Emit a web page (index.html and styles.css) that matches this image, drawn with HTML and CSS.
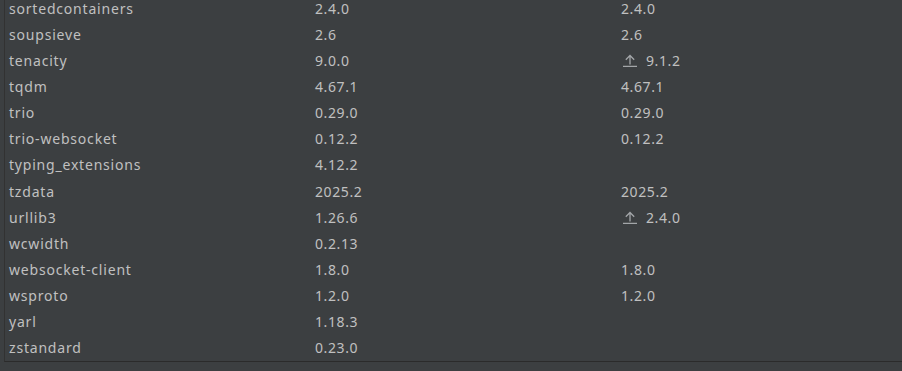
FILE: index.html
```html
<!DOCTYPE html>
<html>
<head>
<meta charset="utf-8">
<link rel="stylesheet" href="styles.css">
</head>
<body>
<div class="panel">
  <div class="table">
    <div class="row"><span class="cell name">sortedcontainers</span><span class="cell">2.4.0</span><span class="cell">2.4.0</span></div>
    <div class="row"><span class="cell name">soupsieve</span><span class="cell">2.6</span><span class="cell">2.6</span></div>
    <div class="row"><span class="cell name">tenacity</span><span class="cell">9.0.0</span><span class="cell upgrade"><svg class="up" width="14" height="13" viewBox="0 0 14 13"><path d="M7 1.5V10.5M2.8 5.7L7 1.5L11.2 5.7M0 12.5H14" fill="none" stroke="#a3a6a9" stroke-width="1.3"/></svg>9.1.2</span></div>
    <div class="row"><span class="cell name">tqdm</span><span class="cell">4.67.1</span><span class="cell">4.67.1</span></div>
    <div class="row"><span class="cell name">trio</span><span class="cell">0.29.0</span><span class="cell">0.29.0</span></div>
    <div class="row"><span class="cell name">trio-websocket</span><span class="cell">0.12.2</span><span class="cell">0.12.2</span></div>
    <div class="row"><span class="cell name">typing_extensions</span><span class="cell">4.12.2</span><span class="cell"></span></div>
    <div class="row"><span class="cell name">tzdata</span><span class="cell">2025.2</span><span class="cell">2025.2</span></div>
    <div class="row"><span class="cell name">urllib3</span><span class="cell">1.26.6</span><span class="cell upgrade"><svg class="up" width="14" height="13" viewBox="0 0 14 13"><path d="M7 1.5V10.5M2.8 5.7L7 1.5L11.2 5.7M0 12.5H14" fill="none" stroke="#a3a6a9" stroke-width="1.3"/></svg>2.4.0</span></div>
    <div class="row"><span class="cell name">wcwidth</span><span class="cell">0.2.13</span><span class="cell"></span></div>
    <div class="row"><span class="cell name">websocket-client</span><span class="cell">1.8.0</span><span class="cell">1.8.0</span></div>
    <div class="row"><span class="cell name">wsproto</span><span class="cell">1.2.0</span><span class="cell">1.2.0</span></div>
    <div class="row"><span class="cell name">yarl</span><span class="cell">1.18.3</span><span class="cell"></span></div>
    <div class="row"><span class="cell name">zstandard</span><span class="cell">0.23.0</span><span class="cell"></span></div>
  </div>
</div>
</body>
</html>
```
FILE: styles.css
```css
html, body {
  margin: 0;
  padding: 0;
  background: #3c3f41;
  height: 100%;
  overflow: hidden;
}
.panel {
  margin-left: 4px;
  margin-top: -5px;
  border-left: 1px solid #323232;
  border-bottom: 1px solid #2b2b2b;
}
.table {
  display: flex;
  flex-direction: column;
}
.row {
  display: grid;
  grid-template-columns: 306px 306px 1fr;
  height: 26.15px;
  align-items: center;
  font-family: "Noto Sans", "Open Sans", sans-serif;
  font-size: 14px;
  letter-spacing: 0.6px;
  color: #c0c0c0;
}
.cell {
  padding-left: 4px;
  white-space: nowrap;
  display: flex;
  align-items: center;
}
.name {
  letter-spacing: 0.8px;
}
.upgrade .up {
  margin-left: 2px;
  margin-right: 9px;
  flex: none;
}
```
